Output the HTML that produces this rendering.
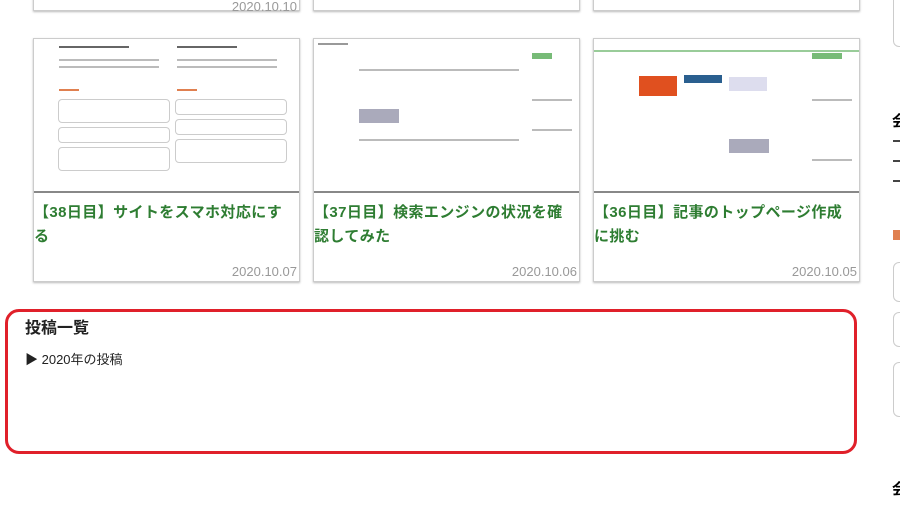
<!DOCTYPE html>
<html><head><meta charset="utf-8"><style>
body{margin:0;width:900px;height:514px;background:#fff;position:relative;overflow:hidden;font-family:"Liberation Sans","Noto Sans CJK JP",sans-serif}
.card{position:absolute;width:265px;border:1px solid #ccc;box-shadow:0 1px 2px #bbb;background:#fff}
.img{position:absolute;left:0;top:0;width:265px;height:152px;border-bottom:2px solid #888;background:#fff;overflow:hidden}
.t{position:absolute;left:0px;top:162px;width:262px;font-size:15px;letter-spacing:0.4px;font-weight:bold;color:#2e7d32;line-height:24px}
.d{position:absolute;right:2px;bottom:2px;font-size:13px;color:#999}
.l{position:absolute;height:2px;background:#bbb}
.bx{position:absolute;border:1px solid #ccc;border-radius:4px}
.sb{position:absolute;left:893px;width:20px;border:1px solid #ccc;border-radius:6px}
</style></head><body>
<div class="card" style="left:33px;top:-20px;height:29px"><div class="d" style="bottom:-4px">2020.10.10</div></div>
<div class="card" style="left:313px;top:-20px;height:29px"></div>
<div class="card" style="left:593px;top:-20px;height:29px"></div>

<div class="card" style="left:33px;top:38px;height:242px">
<div class="img">
<div class="l" style="left:25px;top:7px;width:70px;background:#666"></div><div class="l" style="left:143px;top:7px;width:60px;background:#666"></div>
<div class="l" style="left:25px;top:20px;width:100px"></div><div class="l" style="left:143px;top:20px;width:100px"></div>
<div class="l" style="left:25px;top:27px;width:100px"></div><div class="l" style="left:143px;top:27px;width:100px"></div>
<div class="l" style="left:25px;top:50px;width:20px;background:#e08050"></div><div class="l" style="left:143px;top:50px;width:20px;background:#e08050"></div>
<div class="bx" style="left:24px;top:60px;width:110px;height:22px"></div><div class="bx" style="left:141px;top:60px;width:110px;height:14px"></div>
<div class="bx" style="left:24px;top:88px;width:110px;height:14px"></div><div class="bx" style="left:141px;top:80px;width:110px;height:14px"></div>
<div class="bx" style="left:24px;top:108px;width:110px;height:22px"></div><div class="bx" style="left:141px;top:100px;width:110px;height:22px"></div>
</div>
<div class="t">【38日目】サイトをスマホ対応にする</div><div class="d">2020.10.07</div></div>

<div class="card" style="left:313px;top:38px;height:242px">
<div class="img">
<div class="l" style="left:4px;top:4px;width:30px;background:#999"></div>
<div class="l" style="left:45px;top:70px;width:40px;height:14px;background:#aab"></div>
<div class="l" style="left:218px;top:14px;width:20px;height:6px;background:#7b7"></div>
<div class="l" style="left:218px;top:60px;width:40px"></div><div class="l" style="left:218px;top:90px;width:40px"></div>
<div class="l" style="left:45px;top:30px;width:160px"></div><div class="l" style="left:45px;top:100px;width:160px"></div>
</div>
<div class="t">【37日目】検索エンジンの状況を確認してみた</div><div class="d">2020.10.06</div></div>

<div class="card" style="left:593px;top:38px;height:242px">
<div class="img">
<div class="l" style="left:45px;top:37px;width:38px;height:20px;background:#e0501f"></div>
<div class="l" style="left:90px;top:36px;width:38px;height:8px;background:#2a5f8f"></div>
<div class="l" style="left:135px;top:38px;width:38px;height:14px;background:#dde"></div>
<div class="l" style="left:135px;top:100px;width:40px;height:14px;background:#aab"></div>
<div class="l" style="left:218px;top:14px;width:30px;height:6px;background:#7b7"></div>
<div class="l" style="left:218px;top:60px;width:40px"></div><div class="l" style="left:218px;top:120px;width:40px"></div>
<div class="l" style="left:0;top:11px;width:265px;background:#9c9"></div>
</div>
<div class="t">【36日目】記事のトップページ作成に挑む</div><div class="d">2020.10.05</div></div>

<div style="position:absolute;left:5px;top:309px;width:846px;height:139px;border:3px solid #e0202a;border-radius:14px"></div>
<div style="position:absolute;left:25px;top:314px;font-size:16px;font-weight:bold;color:#222">投稿一覧</div>
<div style="position:absolute;left:25px;top:349px;font-size:13px;color:#222">▶ 2020年の投稿</div>

<div class="sb" style="top:-10px;height:55px"></div>
<div style="position:absolute;left:892px;top:110px;font-size:15px;font-weight:bold">会</div>
<div style="position:absolute;left:893px;top:140px;width:10px;height:60px;background:repeating-linear-gradient(#444 0 2px,#fff 2px 20px)"></div>
<div style="position:absolute;left:893px;top:230px;width:8px;height:10px;background:#e08050"></div>
<div class="sb" style="top:262px;height:38px"></div>
<div class="sb" style="top:312px;height:33px"></div>
<div class="sb" style="top:362px;height:53px"></div>
<div style="position:absolute;left:892px;top:478px;font-size:15px;font-weight:bold">会</div>
</body></html>
